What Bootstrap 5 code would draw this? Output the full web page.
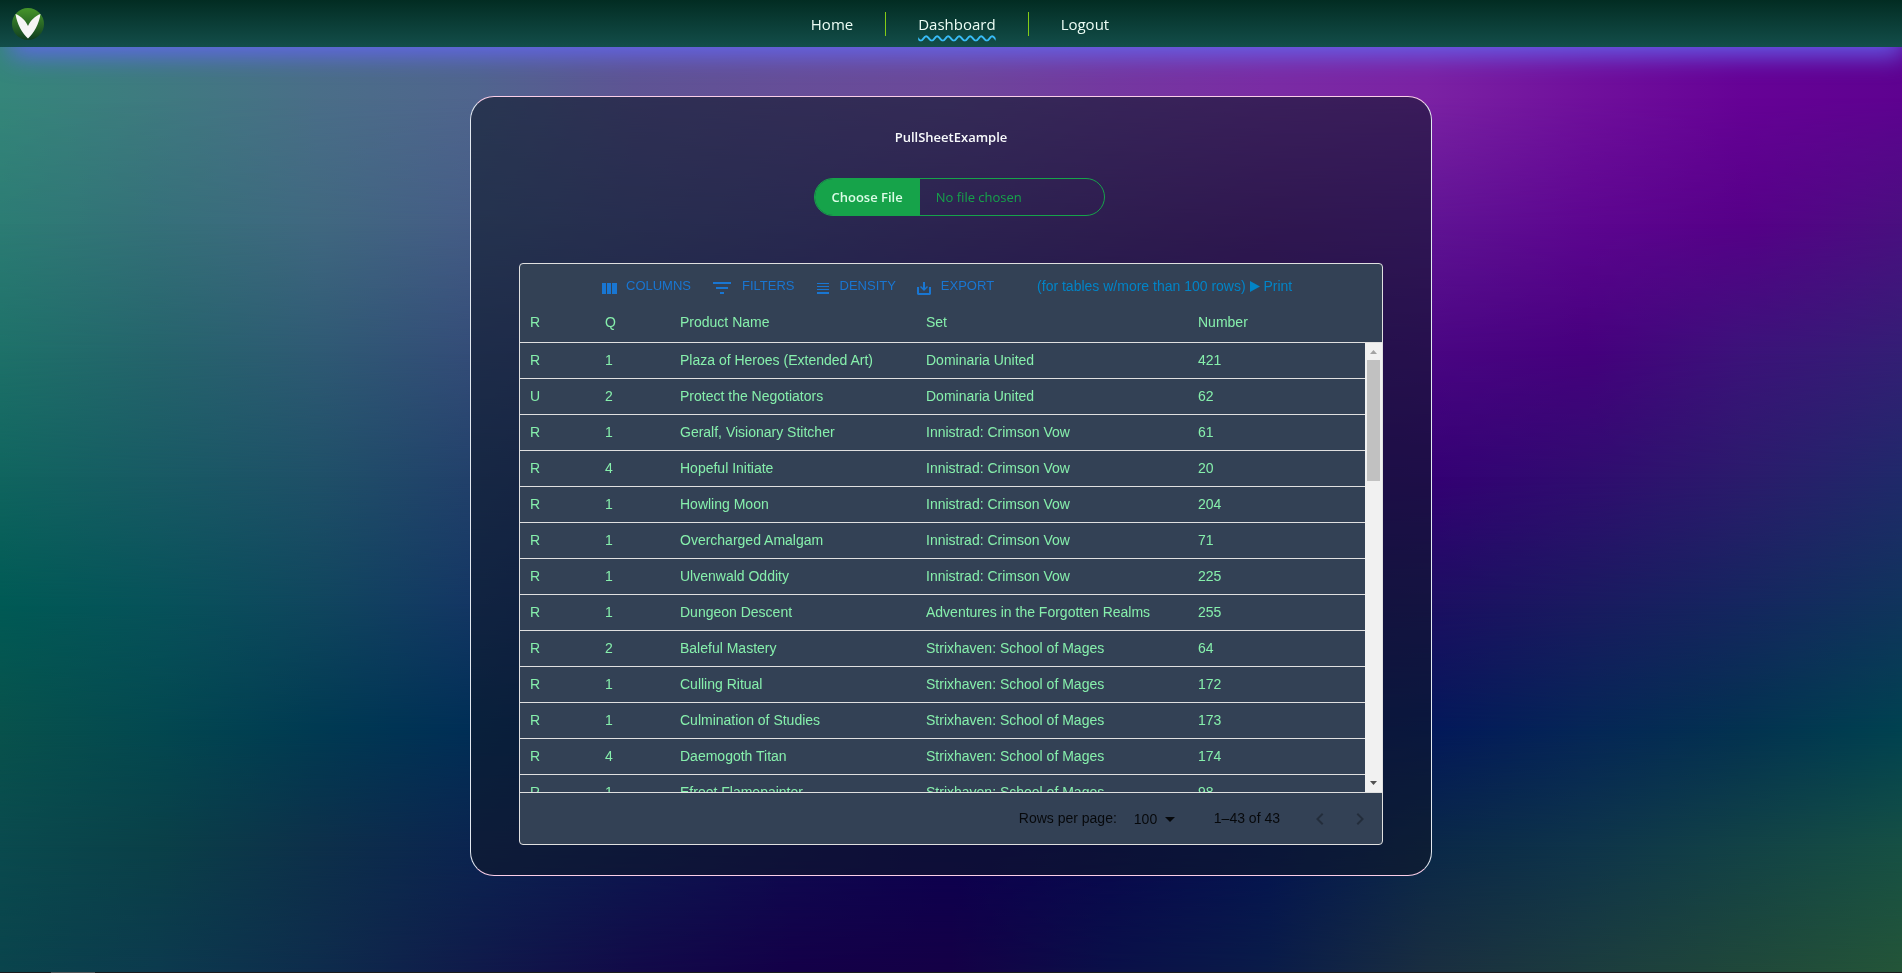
<!DOCTYPE html>
<html lang="en">
<head>
<meta charset="utf-8">
<meta name="viewport" content="width=device-width, initial-scale=1">
<title>PullSheetExample</title>
<link href="https://cdn.jsdelivr.net/npm/bootstrap@5.3.0/dist/css/bootstrap.min.css" rel="stylesheet">
<style>
  body { font-family: "Open Sans", "Noto Sans", sans-serif; background: #0c1a48; }
  .backdrop { z-index: -1; }
  .top-bar { height: 47px; padding: 0 26px 0 12px; background: linear-gradient(#022c22, #134e4a); box-shadow: 6px 14px 24px -5px #6366f1e6; }
  .menu-item { font-size: 15px; line-height: 24px; padding: 0 32px; }
  .menu-item + .menu-item { border-left: 1px solid #84cc16; }
  .menu-item a { color: #ecfdf5; text-decoration: none; }
  .menu-item a.active { text-decoration: underline wavy #38bdf8 2px; text-underline-offset: 5px; }
  .sheet { max-width: 962px; margin: 49px auto; padding: 30px 48px; border: 1px solid #e2e8f0; border-top-color: #fbcfe8; border-bottom-color: #fbcfe8; border-radius: 24px; background: rgba(15, 23, 42, .6); }
  .sheet-title { font-size: 13px; line-height: 20px; color: #f8fafc; margin-bottom: 31px; }
  .file-box { width: 291px; height: 38px; margin: 0 0 47px 16px; border: 1px solid #16a34a; border-radius: 19px; overflow: hidden; color: #16a34a; font-size: 13px; line-height: 36px; }
  .file-box::file-selector-button { height: 36px; padding: 0 17px; margin-right: 16px; border: 0; background: #16a34a; color: #dcfce7; font-weight: 600; }
  .data-grid { font-family: "Liberation Sans", Arial, sans-serif; font-size: 14px; background: #334155; border: 1px solid #e0e0e0; border-radius: 4px; }
  .tool-bar { height: 39px; padding: 4px 0 0 76px; gap: 15px; line-height: 32px; }
  .tool { display: flex; align-items: center; gap: 6px; padding: 0; border: 0; background: none; color: #1976d2; font-size: 13px; }
  .tool svg { margin-top: 4px; fill: currentColor; }
  .print-link { color: #0284c7; margin-left: 28px; text-decoration: none; }
  .grid-view { height: 490px; border-bottom: 1px solid #e0e0e0; }
  .grid-rows { width: 100%; table-layout: fixed; border-collapse: separate; border-spacing: 0; color: #86efac; }
  .grid-rows th { height: 40px; font-weight: 400; }
  .grid-rows td { height: 36px; }
  .grid-rows th, .grid-rows td { padding: 0 0 2px 10px; line-height: 20px; border-bottom: 1px solid #e0e0e0; white-space: nowrap; }
  .scroll-track { top: 40px; right: 0; bottom: 0; width: 17px; background: #f1f1f1; }
  .scroll-thumb { height: 121px; margin: 0 2px; background: #c1c1c1; }
  .pager { height: 51px; padding-right: 10px; color: rgba(0, 0, 0, .87); }
  .pager select { appearance: none; border: 0; background: none; color: inherit; padding: 0; margin-left: 17px; width: 24px; line-height: 20px; }
  .pager .range { margin: 0 28px 0 32px; }
  .pager button { padding: 0; border: 0; background: none; color: rgba(0, 0, 0, .3); line-height: 0; }
  .pager svg { fill: currentColor; }
  .bottom-edge { height: 1px; background: linear-gradient(90deg, #1b1b1b 51px, #555 51px 95px, #1b1b1b 95px); }
</style>
</head>
<body class="min-vh-100 d-flex flex-column">
<div id="backdrop" class="backdrop position-fixed top-0 start-0 w-100 h-100"></div>

<nav class="top-bar d-flex align-items-center">
  <a href="#" aria-label="Start page" class="d-flex">
    <svg width="32" height="32" viewBox="0 0 32 32">
      <defs><linearGradient id="leaf" x2="0" y2="1"><stop stop-color="#46962a"/><stop offset="1" stop-color="#0f3d20"/></linearGradient></defs>
      <circle cx="16" cy="16" r="16" fill="url(#leaf)"/>
      <path d="M3.500 6C9 8 13.500 12.500 16 18C18.500 12.500 23 8 28.500 6C27 16 22 25 16 30.500C10 25 5 16 3.500 6Z" fill="#f5f5f5"/>
    </svg>
  </a>
  <ul class="list-unstyled d-flex justify-content-center flex-grow-1 mb-0" id="menu">
    <li class="menu-item"><a href="#">Home</a></li>
    <li class="menu-item"><a href="#" class="active" aria-current="page">Dashboard</a></li>
    <li class="menu-item"><a href="#">Logout</a></li>
  </ul>
</nav>

<main class="sheet w-100 d-flex flex-column align-items-center">
  <h1 class="sheet-title fw-semibold"><label for="file">PullSheetExample</label></h1>
  <input type="file" id="file" class="file-box">

  <section class="data-grid w-100 overflow-hidden">
    <div class="tool-bar d-flex align-items-center">
      <button class="tool" type="button"><svg width="24" height="24"><path d="M6 7h4v11H6zM11 7h4v11h-4zM16 7h5v11h-5z"/></svg>COLUMNS</button>
      <button class="tool" type="button"><svg width="30" height="24"><path d="M7 6h18v2H7zM10 11h12v2H10zM14 16h4v2h-4z"/></svg>FILTERS</button>
      <button class="tool" type="button"><svg width="24" height="24"><path d="M7 7h12v1H7zM7 10h12v1H7zM7 13h12v1H7zM7 16h12v2H7z"/></svg>DENSITY</button>
      <button class="tool" type="button"><svg width="24" height="24"><path d="M6 11h2v6h10v-6h2v7l-1 1H7l-1-1zM12 6h2v6l2-2 1 1-4 4-4-4 1-1 2 2z"/></svg>EXPORT</button>
      <a href="#" class="print-link">(for tables w/more than 100 rows) <svg width="10" height="11"><path d="M0 0l10 5.500-10 5.500z" fill="currentColor"/></svg> Print</a>
    </div>
    <div class="grid-view position-relative overflow-hidden">
      <table class="grid-rows">
        <colgroup><col style="width:75px"><col style="width:75px"><col style="width:246px"><col style="width:272px"><col></colgroup>
        <thead><tr><th>R</th><th>Q</th><th>Product Name</th><th>Set</th><th>Number</th></tr></thead>
        <tbody>
          <tr><td>R</td><td>1</td><td>Plaza of Heroes (Extended Art)</td><td>Dominaria United</td><td>421</td></tr>
          <tr><td>U</td><td>2</td><td>Protect the Negotiators</td><td>Dominaria United</td><td>62</td></tr>
          <tr><td>R</td><td>1</td><td>Geralf, Visionary Stitcher</td><td>Innistrad: Crimson Vow</td><td>61</td></tr>
          <tr><td>R</td><td>4</td><td>Hopeful Initiate</td><td>Innistrad: Crimson Vow</td><td>20</td></tr>
          <tr><td>R</td><td>1</td><td>Howling Moon</td><td>Innistrad: Crimson Vow</td><td>204</td></tr>
          <tr><td>R</td><td>1</td><td>Overcharged Amalgam</td><td>Innistrad: Crimson Vow</td><td>71</td></tr>
          <tr><td>R</td><td>1</td><td>Ulvenwald Oddity</td><td>Innistrad: Crimson Vow</td><td>225</td></tr>
          <tr><td>R</td><td>1</td><td>Dungeon Descent</td><td>Adventures in the Forgotten Realms</td><td>255</td></tr>
          <tr><td>R</td><td>2</td><td>Baleful Mastery</td><td>Strixhaven: School of Mages</td><td>64</td></tr>
          <tr><td>R</td><td>1</td><td>Culling Ritual</td><td>Strixhaven: School of Mages</td><td>172</td></tr>
          <tr><td>R</td><td>1</td><td>Culmination of Studies</td><td>Strixhaven: School of Mages</td><td>173</td></tr>
          <tr><td>R</td><td>4</td><td>Daemogoth Titan</td><td>Strixhaven: School of Mages</td><td>174</td></tr>
          <tr><td>R</td><td>1</td><td>Efreet Flamepainter</td><td>Strixhaven: School of Mages</td><td>98</td></tr>
        </tbody>
      </table>
      <div class="scroll-track position-absolute d-flex flex-column" aria-hidden="true">
        <svg width="17" height="17"><path d="M5 11h7L8.500 7z" fill="#a3a3a3"/></svg>
        <div class="scroll-thumb"></div>
        <svg class="mt-auto" width="17" height="17"><path d="M5 6h7l-3.500 4z" fill="#505050"/></svg>
      </div>
    </div>
    <div class="pager d-flex align-items-center justify-content-end">
      <label for="per-page">Rows per page:</label>
      <select id="per-page"><option>100</option></select>
      <svg width="24" height="24" aria-hidden="true"><path d="M7 10l5 5 5-5z"/></svg>
      <span class="range">1–43 of 43</span>
      <button type="button" class="me-3" aria-label="Previous page" disabled><svg width="24" height="24"><path d="M15.410 16.590L10.830 12l4.580-4.590L14 6l-6 6 6 6z"/></svg></button>
      <button type="button" aria-label="Next page" disabled><svg width="24" height="24"><path d="M8.590 16.590L13.170 12 8.590 7.410 10 6l6 6-6 6z"/></svg></button>
    </div>
  </section>
</main>
<div class="bottom-edge mt-auto"></div>

<script>
  // Colour mesh: every row is a horizontal gradient that fades into the next one.
  const mesh = [
    [10, '35867a 3f7a80 4a6e88 50658e 5e5494 664e98 6c489a 7438a0 7a2ca4 7b22a4 70109c 660296 5e0290'],
    [23, '2c7c74 357079 406880 455c86 4c5088 50458a 573589 5c2688 60188a 601494 5d0690 560088 4a0f80'],
    [36, '1e7169 25646c 2f5a74 344c78 384078 3a3278 3d2478 401478 430a7c 4a0683 46007e 3c127a 341e75'],
    [49, '10655f 185a64 1f5068 22406b 243068 261c68 280a66 2a0068 300070 340074 300c70 2b1b6c 20296a'],
    [62, '005a55 07525a 10465e 143664 102560 101058 140058 16005c 180860 1c0e62 1a1a60 15265f 10345c'],
    [75, '08524c 034850 003a52 002e56 051e50 0a0a50 0a0050 08084e 081454 03185a 052656 033250 004250'],
    [87, '0a4a4e 0a4048 0d304a 0b2450 0c1850 0e0a50 0c0050 08084e 041450 0a2848 0e344a 124246 165044'],
    [100, '0a444c 0c3a4e 0e2c4c 101a4a 120a48 140048 150046 0a1048 0a1c48 1a2e40 1c3c3e 20483a 245538']
  ];
  let from = 0;
  for (const [at, colours] of mesh) {
    const layer = document.createElement('div');
    layer.className = 'position-absolute top-0 start-0 w-100 h-100';
    layer.style.background = `linear-gradient(90deg, ${colours.split(' ').map(c => '#' + c).join(', ')})`;
    if (from) {
      const fade = `linear-gradient(transparent ${from}%, #000 ${at}%)`;
      layer.style.webkitMaskImage = fade;
      layer.style.maskImage = fade;
    }
    document.getElementById('backdrop').append(layer);
    from = at;
  }
</script>
<script src="https://cdn.jsdelivr.net/npm/bootstrap@5.3.0/dist/js/bootstrap.bundle.min.js"></script>
</body>
</html>
